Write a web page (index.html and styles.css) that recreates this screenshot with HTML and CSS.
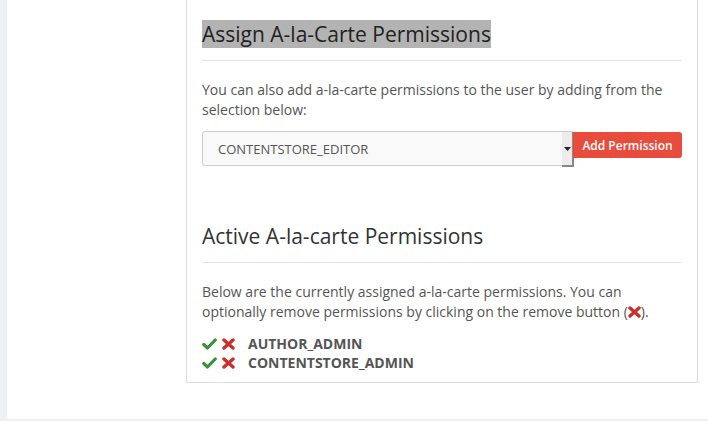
FILE: index.html
```html
<!DOCTYPE html>
<html>
<head>
<meta charset="utf-8">
<link rel="stylesheet" href="styles.css">
</head>
<body>
<div class="page">
  <div class="card">
    <div class="side"></div>
    <div class="panel">
      <h2 class="title"><span class="sel">Assign A-la-Carte Permissions</span></h2>
      <hr class="rule">
      <p class="text">You can also add a-la-carte permissions to the user by adding from the selection below:</p>
      <div class="addrow">
        <div class="select">
          <span class="select-value">CONTENTSTORE_EDITOR</span>
          <span class="select-arrow"><svg width="7" height="4" viewBox="0 0 7 4"><path d="M0 0h7L3.5 4z" fill="#222"/></svg></span>
        </div>
        <button class="btn">Add Permission</button>
      </div>
      <h2 class="title title2">Active A-la-carte Permissions</h2>
      <hr class="rule">
      <p class="text">Below are the currently assigned a-la-carte permissions. You can optionally remove permissions by clicking on the remove button (<svg class="x inline" width="13" height="12" viewBox="0 0 13 12"><path d="M2 2L11 10M11 2L2 10" stroke="#c9302c" stroke-width="3.4" stroke-linecap="round"/></svg>).</p>
      <ul class="perms">
        <li class="perm">
          <svg class="chk" width="15" height="12" viewBox="0 0 15 12"><path d="M1.8 6.5L5.5 10L13.2 2" fill="none" stroke="#3c8f3c" stroke-width="3.2" stroke-linecap="round" stroke-linejoin="round"/></svg>
          <svg class="x" width="13" height="12" viewBox="0 0 13 12"><path d="M2 2L11 10M11 2L2 10" stroke="#c9302c" stroke-width="3.4" stroke-linecap="round"/></svg>
          <span class="perm-name">AUTHOR_ADMIN</span>
        </li>
        <li class="perm">
          <svg class="chk" width="15" height="12" viewBox="0 0 15 12"><path d="M1.8 6.5L5.5 10L13.2 2" fill="none" stroke="#3c8f3c" stroke-width="3.2" stroke-linecap="round" stroke-linejoin="round"/></svg>
          <svg class="x" width="13" height="12" viewBox="0 0 13 12"><path d="M2 2L11 10M11 2L2 10" stroke="#c9302c" stroke-width="3.4" stroke-linecap="round"/></svg>
          <span class="perm-name">CONTENTSTORE_ADMIN</span>
        </li>
      </ul>
    </div>
  </div>
</div>
</body>
</html>
```
FILE: styles.css
```css
html, body {
  margin: 0;
  padding: 0;
  background: #eff0f6;
  font-family: "Open Sans", "Liberation Sans", sans-serif;
  color: #555;
}
.page {
  padding-left: 7px;
  height: 421px;
  overflow: hidden;
}
.card {
  background: #fff;
  height: 419px;
  border-bottom-left-radius: 4px;
  display: flex;
  align-items: flex-start;
}
.side {
  width: 179px;
  flex: none;
}
.panel {
  width: 480px;
  flex: none;
  border: 1px solid #dcdcdc;
  border-top: none;
  padding: 20px 15px 10px 15px;
}
.title {
  margin: 0;
  font-size: 21px;
  font-weight: 400;
  line-height: 29px;
  color: #333;
}
.sel {
  background: #b3b3b3;
  color: #222;
}
.title2 {
  margin-top: 56px;
}
.rule {
  border: none;
  border-top: 1px solid #e3e3e3;
  margin: 11px 0 19px;
}
.text {
  margin: 0;
  font-size: 14px;
  line-height: 20px;
  color: #555;
}
.addrow {
  display: flex;
  align-items: flex-start;
  margin-top: 11px;
}
.select {
  width: 369px;
  height: 33px;
  border: 1px solid #ccc;
  border-radius: 3px 0 0 3px;
  background: #f9f9f9;
  display: flex;
  align-items: center;
  justify-content: space-between;
}
.select-value {
  padding-left: 15px;
  font-size: 13px;
  color: #555;
}
.select-arrow {
  width: 12px;
  height: 35px;
  background: #ececec;
  border-right: 2px solid #888;
  border-bottom: 2px solid #888;
  box-sizing: border-box;
  display: flex;
  align-items: center;
  justify-content: center;
  margin-right: -2px;
  margin-bottom: -2px;
  align-self: flex-start;
}
.btn {
  width: 109px;
  height: 26px;
  margin-top: 1px;
  border: none;
  border-radius: 0 3px 3px 0;
  background: #e74c3c;
  color: #fff;
  font-family: "Open Sans", "Liberation Sans", sans-serif;
  font-size: 12px;
  font-weight: 600;
  padding: 0;
}
.inline {
  vertical-align: -1px;
}
.perms {
  list-style: none;
  margin: 12px 0 0;
  padding: 0;
}
.perm {
  display: flex;
  align-items: center;
  height: 19px;
  gap: 5px;
}
.perm-name {
  margin-left: 8px;
  font-size: 14px;
  font-weight: 700;
  color: #555;
}
```
